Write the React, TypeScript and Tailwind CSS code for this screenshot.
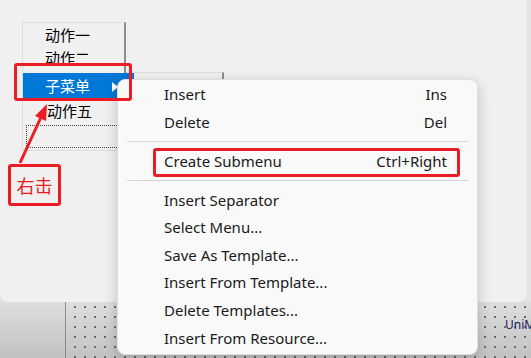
import React from "react";

const ui = { fontFamily: '"Segoe UI", "Noto Sans", "Noto Sans CJK SC", sans-serif' };
const cjk = { fontFamily: '"Microsoft YaHei", "Noto Sans CJK SC", sans-serif' };

type Row = { label: string; key?: string } | "sep";

const rows: Row[] = [
  { label: "Insert", key: "Ins" },
  { label: "Delete", key: "Del" },
  "sep",
  { label: "Create Submenu", key: "Ctrl+Right" },
  "sep",
  { label: "Insert Separator" },
  { label: "Select Menu..." },
  { label: "Save As Template..." },
  { label: "Insert From Template..." },
  { label: "Delete Templates..." },
  { label: "Insert From Resource..." },
];

const DesignMenu = () => (
  <div
    className="absolute left-[22px] top-[22px] w-[104px] h-[129px] bg-[#f0f0f0] border-t border-l border-[#dcdcdc] border-b border-r-2 border-r-[#8c8c8c] text-[15px] text-black"
    style={cjk}
  >
    <div className="h-[23px] mt-[1px] pl-[22px] flex items-center">动作一</div>
    <div className="h-[23px] pl-[22px] flex items-center">动作二</div>
    <div className="h-[27px] mt-[3px] -mr-[10px] pl-[22px] pr-[16px] flex items-center justify-between bg-[#0078d7] text-white">
      <span>子菜单</span>
      <svg width="6" height="10" viewBox="0 0 6 10">
        <path d="M0 0 L6 5 L0 10 Z" fill="#fff" />
      </svg>
    </div>
    <div className="h-[23px] pl-[24px] flex items-center">动作五</div>
    <div className="mx-[3px] mt-[2px] h-[23px] border border-dotted border-[#444]" />
  </div>
);

const ContextMenu = () => (
  <div
    className="absolute left-[117px] top-[79px] w-[361px] h-[276px] bg-[#f9f9f9] border border-[#dedede] rounded-lg shadow-[0_4px_14px_rgba(0,0,0,0.2)] pt-[0.5px] text-[15px] text-[#1a1a1a]"
    style={ui}
  >
    {rows.map((r, i) =>
      r === "sep" ? (
        <div key={i} className="h-[11.4px] flex items-center px-[9px]">
          <div className="h-px w-full bg-[#d6d6d6]" />
        </div>
      ) : (
        <div key={i} className="h-[27.6px] flex items-center justify-between pl-[46px] pr-[30px]">
          <span>{r.label}</span>
          {r.key && <span>{r.key}</span>}
        </div>
      )
    )}
  </div>
);

export default function App() {
  return (
    <div className="relative w-[531px] h-[358px] overflow-hidden bg-[#e4e4e4]" style={ui}>
      <div className="w-[527px] h-[302px] bg-[#f0f0f0] rounded-b-[9px]" />
      <div className="flex h-[56px] bg-gradient-to-b from-[#dedede] to-[#c2c2c2]">
        <div className="w-[65px]" />
        <div className="relative flex-1 border-l border-[#8a8a8a] bg-[radial-gradient(circle,#6a6a6a_0.9px,transparent_1.1px)] bg-[length:10px_10px] bg-[position:4px_0px]">
          <span className="absolute left-[439px] top-[14px] text-[12px] text-[#1c1c5a]">UniM</span>
        </div>
      </div>

      {/* submenu box peeking out behind the context menu */}
      <div className="absolute left-[117px] top-[72px] w-[107px] h-[40px] bg-[#f0f0f0] border-t border-[#dcdcdc] border-r-2 border-r-[#8c8c8c]" />

      <DesignMenu />
      <ContextMenu />

      {/* annotations */}
      <div className="absolute left-[14px] top-[63px] w-[118px] h-[38px] border-[3px] border-[#ec1c24] rounded-[3px]" />
      <div className="absolute left-[153px] top-[148px] w-[307px] h-[29px] border-[3px] border-[#ec1c24] rounded-[3px]" />
      <div
        className="absolute left-[8px] top-[164px] w-[53px] h-[42px] border-[3px] border-[#ec1c24] rounded-[3px] flex items-center justify-center text-[18px] text-[#ec1c24]"
        style={cjk}
      >
        右击
      </div>
      <svg className="absolute left-0 top-0" width="80" height="180" viewBox="0 0 80 180">
        <line x1="20" y1="163" x2="42" y2="115" stroke="#ec1c24" strokeWidth="3" />
        <path d="M47 104 L46 121 L35 116 Z" fill="#ec1c24" />
      </svg>
    </div>
  );
}
